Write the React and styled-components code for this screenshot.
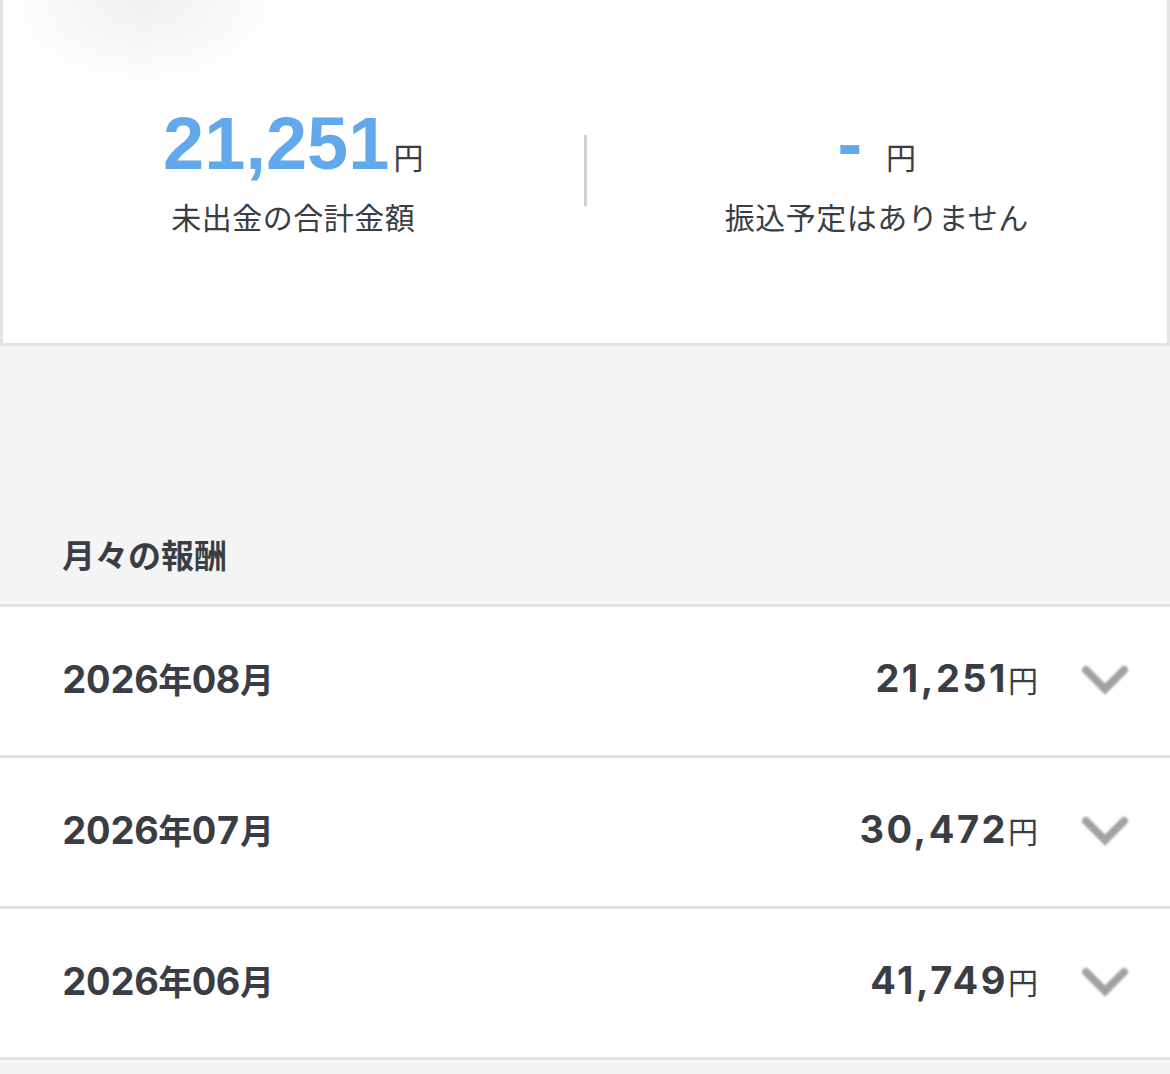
import styled, { createGlobalStyle } from "styled-components";

/* ───────── data ───────── */
const monthly = [
  { month: "2026年08月", amount: "21,251" },
  { month: "2026年07月", amount: "30,472" },
  { month: "2026年06月", amount: "41,749" },
];

/* ───────── styles ───────── */
const GlobalStyle = createGlobalStyle`
  html, body {
    margin: 0;
    padding: 0;
    background: #f4f4f4;
  }
  body {
    font-family: "Noto Sans CJK JP", "Noto Sans", sans-serif;
    color: #3a3e44;
  }
`;

const Page = styled.div`
  width: 1170px;
  min-height: 1074px;
  background: #f4f4f4;
`;

const SummaryCard = styled.section`
  height: 346px;
  box-sizing: border-box;
  padding-top: 104px;
  border: 3px solid #e3e3e3;
  border-top: none;
  background:
    radial-gradient(ellipse 150px 95px at 140px 0px, rgba(0, 0, 0, 0.055), rgba(0, 0, 0, 0) 100%),
    #ffffff;
`;

const SummaryGrid = styled.div`
  display: grid;
  grid-template-columns: 1fr 3px 1fr;
  align-items: center;
`;

const SummaryItem = styled.div`
  display: flex;
  flex-direction: column;
  align-items: center;
`;

const BigAmount = styled.div`
  display: flex;
  align-items: baseline;
  height: 80px;
  line-height: 80px;
  white-space: nowrap;
`;

const BigNumber = styled.span`
  font-family: "Liberation Sans", Arial, sans-serif;
  font-weight: 700;
  font-size: 74px;
  color: #62a9ec;
`;

const BigYen = styled.span`
  font-family: "Noto Sans CJK JP", sans-serif;
  font-size: 30px;
  color: #3a3e44;
  margin-left: ${(p) => p.$gap || 4}px;
`;

const SummaryLabel = styled.div`
  margin-top: 11px;
  font-size: 30px;
  line-height: 42px;
  letter-spacing: 0.5px;
  color: #3a3e44;
`;

const Divider = styled.div`
  width: 3px;
  height: 71px;
  background: #d2d2d2;
`;

const SectionHead = styled.h2`
  margin: 0;
  height: 258px;
  box-sizing: border-box;
  padding: 186px 0 0 62px;
  font-size: 33px;
  font-weight: 700;
  line-height: 44px;
  color: #3a3e44;
`;

const List = styled.ul`
  list-style: none;
  margin: 0;
  padding: 0;
  border-top: 3px solid #e2e2e2;
`;

const Row = styled.li`
  display: flex;
  align-items: center;
  height: 148px;
  padding: 0 38px 0 62px;
  background: #ffffff;
  border-bottom: 3px solid #e2e2e2;
`;

const Month = styled.span`
  flex: 1;
  margin-bottom: 6px;
  font-family: "Inter", "Noto Sans CJK JP", sans-serif;
  font-variant-numeric: tabular-nums;
  font-weight: 700;
  font-size: 38px;
  letter-spacing: -0.5px;
  color: #3a3e44;
`;

const MonthUnit = styled.span`
  font-family: "Noto Sans CJK JP", sans-serif;
  font-size: 34px;
`;

const Amount = styled.span`
  display: flex;
  align-items: baseline;
  margin-bottom: 6px;
  font-family: "Inter", sans-serif;
  font-weight: 700;
  font-size: 38px;
  letter-spacing: 2.5px;
  color: #3a3e44;
`;

const Yen = styled.span`
  font-family: "Noto Sans CJK JP", sans-serif;
  font-weight: 400;
  font-size: 30px;
  letter-spacing: 0;
`;

const Chevron = styled.svg`
  margin-left: 42px;
  width: 52px;
  height: 36px;
  filter: blur(0.8px);
`;

/* ───────── component ───────── */
const ChevronDown = () => (
  <Chevron viewBox="0 0 52 36">
    <polyline
      points="6,7 25,26 44,7"
      fill="none"
      stroke="#a2a2a2"
      strokeWidth="8"
      strokeLinecap="round"
      strokeLinejoin="miter"
    />
  </Chevron>
);

// "2026年08月" -> digits in Inter, 年/月 a touch smaller
const MonthLabel = ({ text }) => (
  <Month>
    {text.split(/([年月])/).map((part, i) =>
      part === "年" || part === "月" ? (
        <MonthUnit key={i}>{part}</MonthUnit>
      ) : (
        part
      )
    )}
  </Month>
);

export default function App() {
  return (
    <Page>
      <GlobalStyle />
      <SummaryCard>
        <SummaryGrid>
          <SummaryItem>
            <BigAmount>
              <BigNumber>21,251</BigNumber>
              <BigYen>円</BigYen>
            </BigAmount>
            <SummaryLabel>未出金の合計金額</SummaryLabel>
          </SummaryItem>
          <Divider />
          <SummaryItem>
            <BigAmount>
              <BigNumber>-</BigNumber>
              <BigYen $gap={24}>円</BigYen>
            </BigAmount>
            <SummaryLabel>振込予定はありません</SummaryLabel>
          </SummaryItem>
        </SummaryGrid>
      </SummaryCard>

      <SectionHead>月々の報酬</SectionHead>

      <List>
        {monthly.map((m) => (
          <Row key={m.month}>
            <MonthLabel text={m.month} />
            <Amount>
              {m.amount}
              <Yen>円</Yen>
            </Amount>
            <ChevronDown />
          </Row>
        ))}
      </List>
    </Page>
  );
}
